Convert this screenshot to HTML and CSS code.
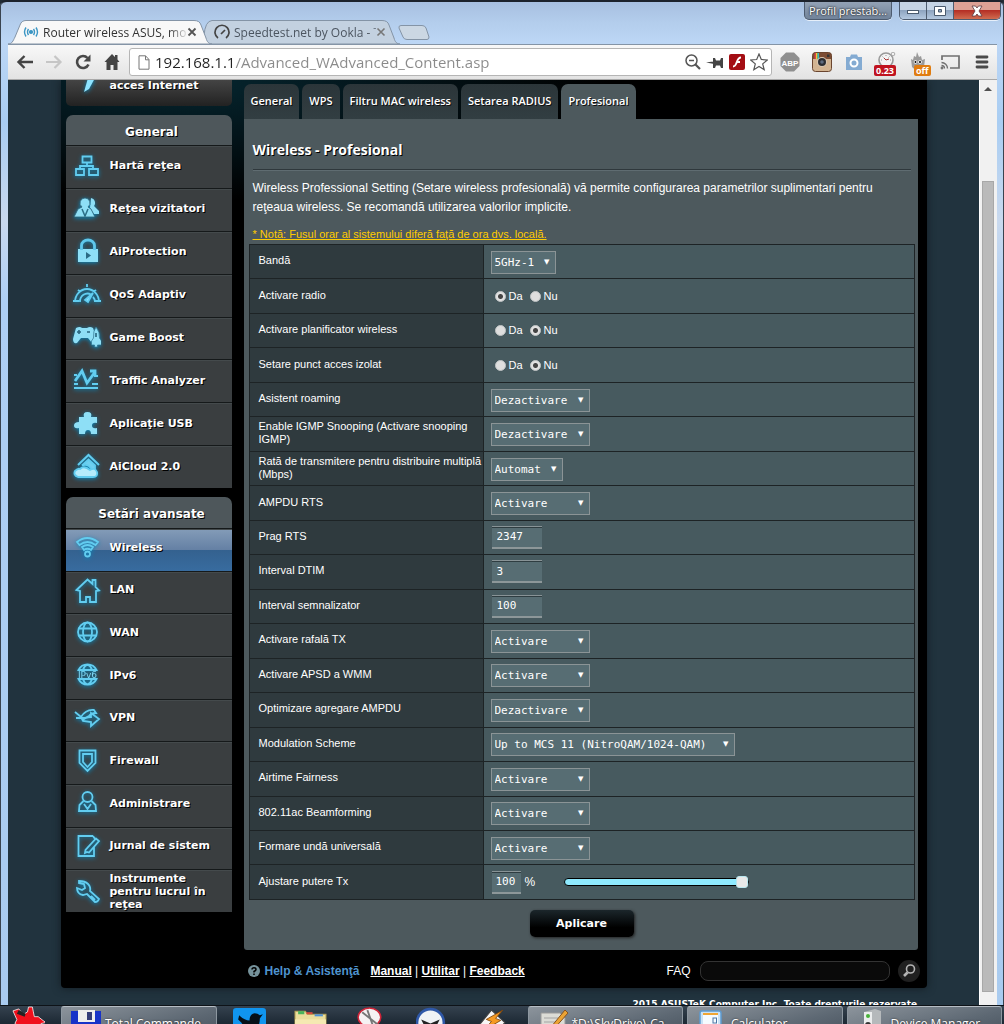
FILE: index.html
```html
<!DOCTYPE html>
<html lang="ro">
<head>
<meta charset="utf-8">
<meta name="viewport" content="width=device-width, initial-scale=1">
<title>Router wireless ASUS</title>
<link rel="stylesheet" href="styles.css">
</head>
<body>
<div class="desktop">
<div class="window">
  <header class="titlebar">
    <nav class="tabs" aria-label="File">
      <div class="tab tab-active">
        <svg class="tab-shape" viewBox="0 0 204 24" preserveAspectRatio="none"><path d="M0 24 C4 24 5 21 7 17 L12 5 C13 2 15 0.500 18 0.500 H186 C190 0.500 192 2 193 5 L198 18 C199 22 201 24 204 24 Z" fill="#f8f8f8" stroke="#8494a6"/></svg>
        <svg class="tab-icon" viewBox="0 0 16 16" fill="none" stroke="#3c96c4" stroke-width="1.400"><circle cx="8" cy="8" r="1.400" fill="#3c96c4"/><path d="M5.500 5Q3.500 8 5.500 11M10.500 5Q12.500 8 10.500 11M3 3.500Q0 8 3 12.500M13 3.500Q16 8 13 12.500"/></svg>
        <span class="tab-text">Router wireless ASUS, mo</span>
        <button class="tab-close" aria-label="Închide fila"><svg viewBox="0 0 10 10" stroke="#555" stroke-width="1.800"><path d="M1.500 1.500l7 7M8.500 1.500l-7 7"/></svg></button>
      </div>
      <div class="tab tab-idle">
        <svg class="tab-shape" viewBox="0 0 196 24" preserveAspectRatio="none"><path d="M4 24 Q2 22 0 16 Q1 1 8 0.500 H178 C182 0.500 184 2 185 5 L190 18 C191 22 193 24 196 24 Z" fill="#c3d1e0" stroke="#8494a6"/></svg>
        <svg class="tab-icon" viewBox="0 0 16 16" fill="none" stroke="#444" stroke-width="1.700"><path d="M4 14A7 7 0 1 1 12 14"/><path d="M7 10l4-4"/></svg>
        <span class="tab-text">Speedtest.net by Ookla - T</span>
        <button class="tab-close" aria-label="Închide fila"><svg viewBox="0 0 10 10" stroke="#777" stroke-width="1.600"><path d="M1.500 1.500l7 7M8.500 1.500l-7 7"/></svg></button>
      </div>
      <button class="new-tab" aria-label="Filă nouă"><svg viewBox="0 0 32 15"><path d="M3 .5H24Q27 .5 28 3L31 12Q31 14.500 29 14.500H9Q6 14.500 5 12L1 3Q.5.500 3 .5Z" fill="#cbd7e3" stroke="#8494a6"/></svg></button>
    </nav>
    <div class="controls">
      <button class="profile">Profil prestab...</button>
      <div class="winbtns">
        <button class="winbtn" aria-label="Minimizează"><svg viewBox="0 0 14 12"><rect x="1.500" y="5.500" width="11" height="3" fill="#fff" stroke="#4a5a6e"/></svg></button>
        <button class="winbtn" aria-label="Maximizează"><svg viewBox="0 0 14 12"><path fill-rule="evenodd" d="M1.500 1.500h11v9h-11zM5.500 4.500h3v2.500h-3z" fill="#fff" stroke="#4a5a6e"/></svg></button>
        <button class="winbtn winclose" aria-label="Închide"><svg viewBox="0 0 14 12"><path d="M2 1h3.500L7 3 8.500 1H12L9 6l3 5H8.500L7 9 5.500 11H2l3-5z" fill="#fff" stroke="#5a3a40" stroke-width=".8"/></svg></button>
      </div>
    </div>
  </header>

  <div class="toolbar">
    <div class="navbtns">
      <button aria-label="Înapoi"><svg viewBox="0 0 18 18" fill="none" stroke="#444" stroke-width="2.400"><path d="M17 9H3M8.500 3L2.500 9l6 6"/></svg></button>
      <button aria-label="Înainte"><svg viewBox="0 0 18 18" fill="none" stroke="#c6c6c6" stroke-width="2.200"><path d="M1 9h14M9.500 3l6 6-6 6"/></svg></button>
      <button aria-label="Reîncarcă"><svg viewBox="0 0 18 18"><path d="M14.500 11.500A6 6 0 1 1 13.500 5" fill="none" stroke="#484848" stroke-width="2.600"/><path d="M16.500 1.500v7h-7z" fill="#484848"/></svg></button>
      <button aria-label="Acasă"><svg viewBox="0 0 18 18"><path d="M9 1L1.500 9h2v8H7.500v-5h3v5h4V9h2L14.500 6.500V2h-2.500v2z" fill="#444"/></svg></button>
    </div>
    <div class="omnibox">
      <svg class="ico-page" viewBox="0 0 12 15" fill="#fff" stroke="#777"><path d="M1 .8h6.500L11 4.500v9.700H1z"/><path d="M7.500.8v4H11" fill="none"/></svg>
      <input class="url" type="text" aria-label="Adresă" value="192.168.1.1/Advanced_WAdvanced_Content.asp">
      <svg class="ico" viewBox="0 0 18 18" fill="none" stroke="#555" stroke-width="1.500"><circle cx="7.500" cy="7.500" r="5.500"/><path d="M5 7.500h5"/><path d="M11.500 11.500l4.500 4.500" stroke-width="2.200"/></svg>
      <svg class="ico" viewBox="0 0 18 18" fill="#444"><path d="M0 9.500L7 8.500v2.300zM7 5h2l1 2.500h4L15 5h2v10h-2l-1-2.500h-4L9 15H7z"/></svg>
      <svg class="ico" viewBox="0 0 18 18"><rect x="1" y="1" width="16" height="16" rx="2" fill="#a40e14"/><path d="M13 4.500C9.500 4.500 9.500 8 8 11Q7 13.500 5 13.500M8.500 9H12" fill="none" stroke="#fff" stroke-width="1.800"/></svg>
      <svg class="ico ico-star" viewBox="0 0 18 18" fill="#fff" stroke="#555" stroke-width="1.200"><path d="M9 1l2.300 5.500 6 .5-4.600 3.900 1.500 5.800L9 13.500l-5.200 3.200 1.500-5.800L.7 7l6-.5z"/></svg>
    </div>
    <div class="exts">
      <button class="ext" aria-label="ABP"><svg viewBox="0 0 20 20"><path d="M6 .5h8L19.500 6v8L14 19.500H6L.5 14V6z" fill="#8f8f8f"/><text x="10" y="13.500" text-anchor="middle" class="abp">ABP</text></svg></button>
      <button class="ext" aria-label="Instagram"><svg viewBox="0 0 20 20"><rect x=".5" y=".5" width="19" height="19" rx="3" fill="#d2b492"/><path d="M.5 7V3.500Q.5.500 3.500.5h13q3 0 3 3V7z" fill="#7c4c33"/><path d="M2.500.8h1.500V7H2.500z" fill="#d44"/><path d="M4 .5h1.500V7H4z" fill="#ec3"/><path d="M5.500.5H7V7H5.500z" fill="#3bb"/><circle cx="10" cy="10" r="5" fill="#d8c8b4"/><circle cx="10" cy="10" r="4" fill="#2c2e33"/><circle cx="10" cy="10" r="1.800" fill="#5d6b80"/><rect x="15" y="2.500" width="2.500" height="2.500" fill="#333"/><rect x=".5" y=".5" width="19" height="19" rx="3" fill="none" stroke="#6a452f"/></svg></button>
      <button class="ext" aria-label="Captură"><svg viewBox="0 0 20 20"><path d="M2 5h4l1-2.500h6L14 5h4v13H2z" fill="#84abd2"/><circle cx="10" cy="11" r="3.500" fill="none" stroke="#fff" stroke-width="2"/></svg></button>
      <button class="ext" aria-label="Cronometru"><svg viewBox="0 0 20 20"><circle cx="10" cy="8" r="7" fill="#f4f4f4" stroke="#999" stroke-width="1.600"/><circle cx="17" cy="2" r="1.800" fill="none" stroke="#aaa"/><path d="M10 3v1M5 8h1M14 8h1M6.500 4.500l1 1M13.500 4.500l-1 1" stroke="#999"/><path d="M10 8L8 6M10 8l3-1" stroke="#a33"/></svg><span class="badge badge-red">0.23</span></button>
      <button class="ext" aria-label="Fantomă"><svg viewBox="0 0 20 20"><path d="M3 7L5 8 6 4l2 1 1-5 2 5 2-1 1 4 3-1-1 8q-6 7-12 0z" fill="#9a9a9a"/><circle cx="7.500" cy="10" r="1.800" fill="#fff"/><circle cx="12" cy="10" r="1.800" fill="#fff"/><circle cx="7.500" cy="10" r="1"/><circle cx="12" cy="10" r="1"/></svg><span class="badge badge-orange">off</span></button>
      <button class="ext" aria-label="Proiectează"><svg viewBox="0 0 20 20" fill="none" stroke="#707070" stroke-width="1.700"><path d="M2 8V4h17v12h-9"/><path d="M1.500 10.500A6 6 0 0 1 7.500 16.500M1.500 13.500A3 3 0 0 1 4.500 16.500" stroke-width="1.300"/><circle cx="2" cy="16" r=".6"/></svg></button>
      <button class="ext" aria-label="Meniu"><svg viewBox="0 0 20 20" stroke="#4a4a4a" stroke-width="2.800" stroke-linecap="round"><path d="M5 5h10M5 10h10M5 15h10"/></svg></button>
    </div>
  </div>

  <div class="view">
    <div class="page">
      <div class="router">
        <aside class="side">
          <a class="quick" href="#">
            <svg class="menu-icon" viewBox="0 0 28 28"><path d="M15 0h7l-6 11-5 3z" fill="#8fe4ff"/></svg>
            <span>acces Internet</span>
          </a>
          <section class="menu menu-general">
            <h2>General</h2>
            <ul>
              <li><a href="#"><svg class="menu-icon" viewBox="0 0 28 28"><path d="M9.500 4.500h9v6h-9zM3 17h8v6H3zM16 17h9v6h-9zM14 11v3M7 17v-3h13v3"/></svg>Hartă reţea</a></li>
              <li><a href="#"><svg class="menu-icon solid" viewBox="0 0 28 28"><path d="M18 3a5 5 0 0 1 3 8l5 5v3h-5l-4-6z"/><path d="M12 3a5 5 0 0 1 3 9l3 2 4 8H1l4-8 4-2a5 5 0 0 1 3-9z" stroke="#2b5f74" stroke-width=".8"/><path d="M9 14l3 7 3-7" fill="none" stroke="#2b6f88" stroke-width="1.500"/></svg>Reţea vizitatori</a></li>
              <li><a href="#"><svg class="menu-icon solid" viewBox="0 0 28 28"><path d="M5 11h20v13H5z"/><path d="M8.500 12V7.500a6.500 5.500 0 0 1 13 0V12" fill="none" stroke="#5fc8ec" stroke-width="2.800"/><path d="M13 14l5 3.500-5 3.500z" fill="#2c6b84"/></svg>AiProtection</a></li>
              <li><a href="#"><svg class="menu-icon" viewBox="0 0 28 28" stroke-width="1.800"><path d="M2 21a12 13 0 1 1 24 0M7 21a7.500 8 0 0 1 11-7.500M22 21q0-3-2-5M14 3v3M0 20h6M22 20h6M5 9l2.500 2M23 9l-2.500 2"/><path d="M12 19l8-7-5 9z" fill="#8fe4ff"/></svg>QoS Adaptiv</a></li>
              <li><a href="#"><svg class="menu-icon solid" viewBox="0 0 28 28"><path d="M3 5q4-2 6 0h5q3-2 6 0l2 6v9h-3l-4-5H8l-4 5Q0 21 0 16z"/><path d="M23 4q4 5 3.500 11l2 3v4h-4v2h-3v-2h-3v-4l2-3Q20 8 23 4z" stroke="#2d718c" stroke-width=".7"/><path d="M4 9h4M6 7v4M14 9h3M23 10v4" stroke="#286780" stroke-width="1.600"/></svg>Game Boost</a></li>
              <li><a href="#"><svg class="menu-icon" viewBox="0 0 28 28" stroke-width="1.800"><path d="M1 22h24M1 18h4M19 18h6M1 9h3M21 10h4"/><path d="M2 15L9 5l5 12 8-11M17 5h5v5" stroke-width="2.800"/></svg>Traffic Analyzer</a></li>
              <li><a href="#"><svg class="menu-icon solid" viewBox="0 0 28 28"><path d="M6 8h5q-1.500-5 3.500-5T18 8h6v6q-5-1-5 2.500t5 2.500v6h-6q0-4-3-4t-3 4H6v-6q-5 1-5-2.500T6 13z"/></svg>Aplicaţie USB</a></li>
              <li><a href="#"><svg class="menu-icon" viewBox="0 0 28 28"><path d="M5 13L15.500 3 26 13" stroke-width="2"/><path d="M9 13.500L15.500 7.500 22 13.500v4h-3Q15 11 9 13.500z" fill="#6fd0f0"/><path d="M5 25q-5-2-3-6 3-3 5-2 4-4 10 1 5-3 7 2 1 5-4 5z" fill="#b5ecfc"/></svg>AiCloud 2.0</a></li>
            </ul>
          </section>
          <section class="menu menu-advanced">
            <h2>Setări avansate</h2>
            <ul>
              <li class="selected"><a href="#"><svg class="menu-icon" viewBox="0 0 28 28" stroke="#4cbde6"><path d="M4 9q10-8 21 0l-2.500 3q-8-6-16 0zM9 14q5.500-4 11 0l-2 3q-3.500-2.500-7 0z"/><circle cx="14.500" cy="21" r="2.500"/></svg>Wireless</a></li>
              <li><a href="#"><svg class="menu-icon" viewBox="0 0 28 28"><path d="M3.500 14L14.500 3.500l5 4.500V4h3v7l3.500 3.500-3 .5v11h-6v-5h-4v5H7V15z"/></svg>LAN</a></li>
              <li><a href="#"><svg class="menu-icon" viewBox="0 0 28 28"><circle cx="14.500" cy="13" r="9.500"/><ellipse cx="14.500" cy="13" rx="4.500" ry="9.500"/><path d="M5.500 9.500h18M5.500 16.500h18"/></svg>WAN</a></li>
              <li><a href="#"><svg class="menu-icon" viewBox="0 0 28 28"><path d="M5.500 9a10 10 0 0 1 18 0zM5.500 18a10 10 0 0 0 18 0zM10 9q1-4 4.500-5.500Q18 5 19 9M10 18q1 4 4.500 5.500Q18 22 19 18"/><text x="14.500" y="17" text-anchor="middle" class="ipv6">IPv6</text></svg>IPv6</a></li>
              <li><a href="#"><svg class="menu-icon" viewBox="0 0 28 28" stroke-width="1.500"><path d="M2 8l6 5q5-8 13-7l2 3q-5 0-7 3l-4 2H3M8 13l2 4 8 1v4l8-7-8-6v4q-6 0-8 3"/></svg>VPN</a></li>
              <li><a href="#"><svg class="menu-icon" viewBox="0 0 28 28"><path d="M6.500 3.500h16V16l-8 8-8-8zM10 7h9v8l-4.500 5-4.500-5z"/></svg>Firewall</a></li>
              <li><a href="#"><svg class="menu-icon" viewBox="0 0 28 28"><circle cx="14.500" cy="8" r="5"/><path d="M10.500 12l-4 4-.5 6h17l-.5-6-4-4M11 15l3.500 5 3.500-5"/></svg>Administrare</a></li>
              <li><a href="#"><svg class="menu-icon" viewBox="0 0 28 28"><path d="M20 4H5.500v20H21v-9M20 4l2 3M14 20l-2 1 .5-3L23 6.500l3 2.500-10 11.500z"/></svg>Jurnal de sistem</a></li>
              <li class="long"><a href="#"><svg class="menu-icon" viewBox="0 0 28 28" stroke-width="1.800"><path d="M6 6l5 1 1 4-3 2-5-2q0 6 6 7l4-1 8 8q3 0 4-3l-9-8q1-4-2-7t-9-3zM18 19l4 4"/></svg>Instrumente pentru lucrul în reţea</a></li>
            </ul>
          </section>
        </aside>

        <main class="main">
          <nav class="subtabs">
            <a href="#">General</a><a href="#">WPS</a><a href="#">Filtru MAC wireless</a><a href="#">Setarea RADIUS</a><a class="current" href="#">Profesional</a>
          </nav>
          <form class="panel">
            <h1>Wireless - Profesional</h1>
            <p class="intro">Wireless Professional Setting (Setare wireless profesională) vă permite configurarea parametrilor suplimentari pentru reţeaua wireless. Se recomandă utilizarea valorilor implicite.</p>
            <a class="note" href="#">* Notă: Fusul orar al sistemului diferă faţă de ora dvs. locală.</a>
            <table class="settings">
              <tr><th><label for="band">Bandă</label></th><td><span class="pick w-65"><select id="band"><option>5GHz-1</option></select></span></td></tr>
              <tr><th>Activare radio</th><td><div class="radios"><label><input type="radio" name="radio" checked>Da</label><label><input type="radio" name="radio">Nu</label></div></td></tr>
              <tr><th>Activare planificator wireless</th><td><div class="radios"><label><input type="radio" name="sched">Da</label><label><input type="radio" name="sched" checked>Nu</label></div></td></tr>
              <tr><th>Setare punct acces izolat</th><td><div class="radios"><label><input type="radio" name="iso">Da</label><label><input type="radio" name="iso" checked>Nu</label></div></td></tr>
              <tr><th><label for="roam">Asistent roaming</label></th><td><span class="pick"><select id="roam"><option>Dezactivare</option></select></span></td></tr>
              <tr><th><label for="igmp">Enable IGMP Snooping (Activare snooping<br>IGMP)</label></th><td><span class="pick"><select id="igmp"><option>Dezactivare</option></select></span></td></tr>
              <tr><th><label for="rate">Rată de transmitere pentru distribuire multiplă<br>(Mbps)</label></th><td><span class="pick w-72"><select id="rate"><option>Automat</option></select></span></td></tr>
              <tr><th><label for="ampdu">AMPDU RTS</label></th><td><span class="pick"><select id="ampdu"><option>Activare</option></select></span></td></tr>
              <tr><th><label for="rts">Prag RTS</label></th><td><input class="num" id="rts" type="text" value="2347"></td></tr>
              <tr><th><label for="dtim">Interval DTIM</label></th><td><input class="num" id="dtim" type="text" value="3"></td></tr>
              <tr><th><label for="beacon">Interval semnalizator</label></th><td><input class="num" id="beacon" type="text" value="100"></td></tr>
              <tr><th><label for="burst">Activare rafală TX</label></th><td><span class="pick"><select id="burst"><option>Activare</option></select></span></td></tr>
              <tr><th><label for="apsd">Activare APSD a WMM</label></th><td><span class="pick"><select id="apsd"><option>Activare</option></select></span></td></tr>
              <tr><th><label for="aggr">Optimizare agregare AMPDU</label></th><td><span class="pick"><select id="aggr"><option>Dezactivare</option></select></span></td></tr>
              <tr><th><label for="mod">Modulation Scheme</label></th><td><span class="pick w-244"><select id="mod"><option>Up to MCS 11 (NitroQAM/1024-QAM)</option></select></span></td></tr>
              <tr><th><label for="air">Airtime Fairness</label></th><td><span class="pick"><select id="air"><option>Activare</option></select></span></td></tr>
              <tr><th><label for="beam">802.11ac Beamforming</label></th><td><span class="pick"><select id="beam"><option>Activare</option></select></span></td></tr>
              <tr><th><label for="univ">Formare undă universală</label></th><td><span class="pick"><select id="univ"><option>Activare</option></select></span></td></tr>
              <tr><th><label for="power">Ajustare putere Tx</label></th><td><div class="power"><input class="num num-small" id="power" type="text" value="100"><span class="percent">%</span><input class="slider" type="range" min="0" max="100" value="100" aria-label="Ajustare putere Tx"></div></td></tr>
            </table>
            <button class="apply" type="button">Aplicare</button>
          </form>
          <footer class="foot">
            <svg class="help-icon" viewBox="0 0 12 12"><circle cx="6" cy="6" r="6" fill="#76939c"/><path d="M4 4.600Q4 2.800 6 2.800T8 4.500Q8 5.500 6 6.500V7.500M6 8.500V10" fill="none" stroke="#000" stroke-width="1.500"/></svg>
            <span class="help">Help &amp; Asistenţă</span>
            <span class="links"><a href="#">Manual</a> | <a href="#">Utilitar</a> | <a href="#">Feedback</a></span>
            <label class="faq-label" for="faq">FAQ</label>
            <input class="faq" id="faq" type="text">
            <button class="search" type="button" aria-label="Caută"><svg viewBox="0 0 22 22" fill="none" stroke="#b4b4b4"><circle cx="12.500" cy="9" r="4" stroke-width="1.600"/><path d="M9.500 12.500L6 16" stroke-width="2.600"/></svg></button>
          </footer>
        </main>
      </div>
      <p class="copyright">2015 ASUSTeK Computer Inc. Toate drepturile rezervate.</p>
    </div>
    <div class="scrollbar"><span class="scroll-up"></span><span class="scroll-thumb"></span></div>
  </div>
</div>

<div class="taskbar">
  <button class="task-icon first" aria-label="Irfan"><svg viewBox="0 0 34 34"><path d="M1 5l6-2 3 4 3 1 3-2 1-5h4l1 5 1 5 4 0 5 4 3 2-5 1-2 5 5 8-9 4H9l2-9-7 1 4-6-5-3 2-4z" fill="#f0101c" stroke="#fff" stroke-width=".8"/><path d="M7 4l7 4-1 3-8-3z" fill="#222"/></svg></button>
  <button class="task"><svg viewBox="0 0 32 32"><path d="M1 3h30v28H1z" fill="#1733c8"/><path d="M8 2h17v12H8z" fill="#ededed"/><path d="M17 4h5v8h-5z" fill="#333c78"/><path d="M6 17h21v14H6z" fill="#fff"/></svg><span>Total Commande</span></button>
  <button class="task-icon" aria-label="Twitter"><svg viewBox="0 0 32 32"><rect y="2" width="32" height="30" rx="3" fill="#1095ef"/><path d="M6 9q5 5 10 5 0-6 5-7 3 0 5 2l3-1-3 4q0 14-13 14l-7-2 5-2-4-4 2-1-4-4z" fill="#061018"/></svg></button>
  <button class="task-icon" aria-label="Dosare"><svg viewBox="0 0 32 32"><path d="M1 5h10l2 3h18v22H1z" fill="#eadd9b" stroke="#b9a457"/><path d="M4 5h6v3H4z" fill="#48b35c"/><path d="M12 6h6v2h-6z" fill="#da4a3c"/><path d="M20 8h8v2h-8z" fill="#4f92d8"/><path d="M1 13h30v17H1z" fill="#f5e9b2"/></svg></button>
  <button class="task-icon" aria-label="Snip"><svg viewBox="0 0 32 32"><ellipse cx="14" cy="11" rx="11" ry="9" fill="#f5f1f2" stroke="#cf2438" stroke-width="1.500"/><path d="M7 6l15 12M12 4l5 14" stroke="#777" stroke-width="1.800"/></svg></button>
  <button class="task-icon" aria-label="Player"><svg viewBox="0 0 32 32"><circle cx="14" cy="16" r="13" fill="#eff2f5" stroke="#2f58a8" stroke-width="2.500"/><path d="M5 13l9 4 9-4-3 6-6-1-6 1z" fill="#222"/></svg></button>
  <button class="task-icon" aria-label="Winamp"><svg viewBox="0 0 32 32"><path d="M1 20L14 4l13 12-12 14z" fill="#f6f6f6" stroke="#444"/><path d="M25 4L9 13l5 2-8 9 17-10-5-2z" fill="#f59a23" stroke="#7c430a" stroke-width=".8"/></svg></button>
  <button class="task"><svg viewBox="0 0 32 32"><path d="M4 5h19l5 5v22H4z" fill="#dcdcd6" stroke="#999"/><path d="M7 10h14M7 14h14" stroke="#a4a4a4"/><path d="M28 2l3 3-15 17-4 2 2-5z" fill="#eba335" stroke="#87521d"/></svg><span>*D:\SkyDrive\ Ca</span></button>
  <button class="task"><svg viewBox="0 0 32 32"><rect x="4" y="3" width="21" height="28" rx="2" fill="#c9e2f6" stroke="#5e9bd0" stroke-width="1.500"/><path d="M7 6h15v10H7z" fill="#f6fbff"/><path d="M7 5h15v2H7z" fill="#f0a534"/><rect x="17" y="10" width="3.500" height="5" fill="none" stroke="#4a76a6"/></svg><span>Calculator</span></button>
  <button class="task"><svg viewBox="0 0 32 32"><path d="M8 4l11-3 6 2v29H8z" fill="#b5b9bb"/><path d="M8 4h8v28H8z" fill="#eceeee"/><circle cx="12" cy="8" r="2" fill="#48b13a"/><circle cx="12" cy="17" r="3" fill="#333"/></svg><span>Device Manager</span></button>
</div>
</div>
</body>
</html>
```

FILE: styles.css
```css
* { box-sizing: border-box; }
body { margin: 0; font-family: "Liberation Sans", Arial, sans-serif; color: #fff; }
button { font: inherit; color: inherit; border: 0; padding: 0; margin: 0; background: none; }
svg { display: block; }
h1, h2, p, ul { margin: 0; padding: 0; }
ul { list-style: none; }

.desktop { height: 100vh; display: flex; flex-direction: column; overflow: hidden; background: #202b35; }
.window {
  flex: 1; min-height: 0; display: flex; flex-direction: column; padding: 0 7px 0 8px;
  border-top: 2px solid #1c222c; border-radius: 6px 6px 0 0;
  background: linear-gradient(180deg, #a7bfe0 0, #b3cdec 20px, #bcd6f5 40px, #a9cdf2 120px, #c9d9ee 220px, #aecff4 300px, #a9cbef 100%);
  box-shadow: inset 1px 0 #39434f, inset -1px 0 #39434f;
}

/* title bar */
.titlebar { height: 42px; display: flex; justify-content: space-between; }
.tabs { display: flex; align-items: flex-end; }
.tab { position: relative; display: flex; align-items: center; height: 24px; font: 12px "Open Sans", sans-serif; }
.tab-shape { position: absolute; inset: 0; width: 100%; height: 100%; }
.tab-active { width: 204px; padding-left: 15px; color: #333; z-index: 1; }
.tab-idle { width: 196px; padding-left: 10px; margin-left: -8px; color: #4c5560; }
.tab-icon { position: relative; width: 16px; height: 16px; margin-right: 4px; flex: none; }
.tab-text {
  position: relative; width: 144px; white-space: nowrap;
  -webkit-mask-image: linear-gradient(90deg, #000 126px, transparent 146px);
}
.tab-idle .tab-text { width: 142px; -webkit-mask-image: linear-gradient(90deg, #000 134px, transparent 154px); }
.tab-close { position: relative; width: 10px; height: 10px; flex: none; }
.new-tab { width: 32px; height: 15px; margin: 0 0 4px -2px; }
.controls { display: flex; gap: 7px; align-items: flex-start; margin-right: -4px; }
.profile, .winbtns { height: 18px; border: 1px solid #4d5b6f; border-top: 0; border-radius: 0 0 5px 5px; box-shadow: 0 1px #e6effa; }
.profile {
  width: 88px; font: 11px/16px "Open Sans", sans-serif; color: #fff; white-space: nowrap;
  background: linear-gradient(#93a2b5, #71839a); text-shadow: 0 0 2px #222, 0 0 2px #222;
}
.winbtns { display: flex; overflow: hidden; }
.winbtn { width: 27px; display: grid; place-items: center; background: linear-gradient(#c5d3e4 0 45%, #8ea4c0 50%, #b4c8e0); border-right: 1px solid #4d5b6f; }
.winbtn svg { width: 14px; height: 12px; }
.winclose { width: 46px; border-right: 0; background: linear-gradient(#dda195 0 45%, #b52f25 50%, #d06c50); }

/* toolbar */
.toolbar {
  height: 36px; display: flex; align-items: center; padding: 0 5px 0 8px;
  background: linear-gradient(#f8f8f8, #e3e3e3); border-top: 1px solid #8494a6; border-bottom: 1px solid #a9a9a9;
}
.navbtns { display: flex; gap: 11px; margin-right: 8px; }
.navbtns svg { width: 18px; height: 18px; }
.omnibox { flex: 1; height: 28px; display: flex; align-items: center; gap: 4px; padding: 0 3px 0 8px; background: #fff; border: 1px solid #b5b5b5; border-radius: 3px; }
.ico-page { width: 12px; height: 15px; }
.url {
  flex: 1; min-width: 0; border: 0; padding: 0; margin-left: 1px; font: 15px/24px "Open Sans", sans-serif; color: transparent;
  background: linear-gradient(90deg, #222 78px, #8a8a8a 78px); -webkit-background-clip: text; background-clip: text;
}
.ico { width: 18px; height: 18px; }
.exts { display: flex; gap: 12px; margin-left: 8px; }
.ext { position: relative; width: 20px; height: 20px; }
.abp { font: bold 8px "Liberation Sans", sans-serif; fill: #fff; }
.badge { position: absolute; left: -2px; top: 13px; height: 11px; padding: 0 2px; border-radius: 2px; font: bold 9px/11px "Open Sans", sans-serif; color: #fff; }
.badge-red { background: #c0131f; }
.badge-orange { left: 6px; background: #e07c10; }

/* page area */
.view { flex: 1; min-height: 0; display: flex; overflow: hidden; }
.page { flex: 1; overflow: hidden; background: #21333e; }
.router {
  width: 866px; max-width: 100%; margin: 0 auto; display: flex; align-items: flex-start; gap: 12px; padding: 0 9px 2px 5px;
  border-radius: 0 0 4px 4px; box-shadow: 0 0 8px #131c22;
  background: radial-gradient(ellipse 420px 120px at 130px 0, #06262f 0, #03151b 45%, #000 100%) #000;
}
.side { width: 166px; flex: none; font: bold 11px/13px "DejaVu Sans", Verdana, sans-serif; text-shadow: 1px 1px #000; }
.side a { color: #fff; text-decoration: none; }
.quick { height: 26px; display: flex; align-items: center; gap: 9px; padding: 0 0 16px 7px; border-radius: 0 0 5px 5px; background: linear-gradient(#444, #222); overflow: hidden; }
.menu-icon { width: 28px; height: 28px; flex: none; fill: none; stroke: #62cdf0; stroke-width: 1.800; filter: drop-shadow(0 1px 2px #0b86b8); }
.quick .menu-icon { align-self: flex-start; margin-top: -2px; stroke: none; }
.solid { fill: #8edff6; stroke: none; }
.ipv6 { font: 9px "DejaVu Sans", sans-serif; fill: #7fd8f5; stroke: none; text-shadow: none; }
.menu { margin-top: 9px; }
.menu h2 { height: 30px; padding-top: 4px; font-size: 12px; line-height: 26px; text-align: center; border-radius: 7px 7px 0 0; background: #4e575b; padding-left: 6px; }
.menu ul { display: grid; grid-auto-rows: 1fr; background: #3a3e40; }
.menu li { display: grid; border-top: 1px solid #15191a; box-shadow: inset 0 1px #444a4c; }
.menu li a { display: flex; align-items: center; gap: 9px; padding: 0 10px 2px 7px; }
.menu-general ul { height: 343px; }
.menu-advanced h2 { height: 31px; }
.menu-advanced ul { height: 384px; }
.menu-advanced li a { padding-bottom: 5px; }
.menu-advanced .long a { padding-bottom: 0; }
.selected { background: linear-gradient(#849cb8 0, #6480a4 50%, #34618f 50%, #386c9f 100%); }

/* settings panel */
.main { flex: 1; min-width: 0; }
.subtabs { display: flex; gap: 3px; padding-top: 4px; }
.subtabs a {
  height: 35px; padding: 0 7px; font: 600 11px/34px "Open Sans", Tahoma, sans-serif; color: #fff; text-decoration: none;
  border-radius: 7px 7px 0 0; background: linear-gradient(#2b3539, #323e42); text-shadow: 1px 1px #111;
}
.subtabs .current { background: #4d595d; }
.panel { display: flex; flex-direction: column; align-items: flex-start; padding: 21px 3px 13px 5px; background: #4d595d; border-radius: 0 0 3px 3px; }
.panel h1 { align-self: stretch; margin: 0 4px; height: 30px; font: bold 14px/20px "Open Sans", Verdana, sans-serif; text-shadow: 1px 1px #000; border-bottom: 1px solid #2f383c; box-shadow: 0 1px #5f6c71; }
.intro { margin: 9px 4px 0; font-size: 12px; line-height: 19px; }
.note { margin: 10px 4px 2px; font-size: 11px; line-height: 15px; color: #fc0; }
.settings { width: 100%; height: 656px; table-layout: fixed; border-collapse: collapse; font-size: 11px; line-height: 13px; background: #475a5f; }
.settings tr { height: 34px; }
.settings th, .settings td { border: 1px solid #1d2325; padding: 0 7px; text-align: left; }
.settings th { width: 234px; padding: 0 0 2px 9px; font-weight: normal; white-space: nowrap; background: #2f3a3e; }
.settings td { border-left-color: #222b2e; }
.pick { position: relative; display: block; width: 99px; height: 23px; margin-top: 1px; }
.pick::after { content: "▼"; position: absolute; right: 6px; top: 0; font: 7px/23px "DejaVu Sans", sans-serif; pointer-events: none; }
.pick select { appearance: none; width: 100%; height: 23px; padding: 0 0 0 3px; border: 1px solid #8b9496; border-radius: 0; background: #576d73; color: #fff; font: 11px "DejaVu Sans Mono", monospace; }
.w-65 { width: 65px; }
.w-72 { width: 72px; }
.w-244 { width: 244px; }
.radios { display: flex; gap: 7px; padding-left: 4px; }
.radios label { display: flex; align-items: center; gap: 3px; }
.radios input { appearance: none; width: 11px; height: 11px; margin: 0; border-radius: 50%; border: 1px solid #bfc3c4; background: #dedede; }
.radios input:checked { background: radial-gradient(circle, #444 0 2px, #e2e2e2 3px); }
.num { display: block; width: 50px; height: 23px; margin-left: 1px; padding: 0 0 0 5px; border: 0; border-top: 1px solid #889396; border-bottom: 2px solid #8d9799; background: #576d73; box-shadow: inset 0 1px #2f3d41; color: #fff; font: 11px "DejaVu Sans Mono", monospace; }
.num-small { width: 29px; padding-left: 4px; }
.power { display: flex; align-items: center; }
.percent { margin-left: 4px; font-size: 12px; }
.slider { appearance: none; width: 185px; height: 13px; margin: 0 0 0 29px; background: none; }
.slider::-webkit-slider-runnable-track { height: 8px; border: 1px solid #000; border-radius: 4px; background: #8feaff; }
.slider::-webkit-slider-thumb { appearance: none; width: 12px; height: 12px; margin-top: -3px; border: 1px solid #b8e6ee; border-radius: 3px; background: #e8e8e8; }
.apply { align-self: center; width: 104px; height: 27px; margin-top: 10px; border-radius: 5px; background: linear-gradient(#1b262b, #000 65%); box-shadow: 1px 1px 3px #222; font: bold 11px/27px "DejaVu Sans", Verdana, sans-serif; }

.foot { display: flex; align-items: center; height: 31px; margin-top: 5px; padding-left: 4px; margin-right: -2px; font-size: 12px; }
.help-icon { width: 12px; height: 12px; margin-right: 5px; }
.help { font-weight: bold; color: #4f94cf; }
.links { margin-left: 11px; }
.links a { color: #fff; font-weight: bold; }
.faq-label { margin-left: auto; }
.faq { width: 190px; height: 20px; margin: 0 8px 0 9px; padding: 0 8px; border: 1px solid #333; border-radius: 8px; background: #0a0a0a; color: #fff; }
.search { width: 22px; height: 22px; border-radius: 50%; background: #202020; }
.copyright { width: 866px; max-width: 100%; margin: 9px auto 0; padding-right: 6px; text-align: right; font: bold 9px/14px "DejaVu Sans", sans-serif; }

.scrollbar { width: 18px; display: flex; flex-direction: column; background: #f1f1f1; border-left: 1px solid #fff; padding: 7px 3px 13px 2px; }
.scroll-up { align-self: center; border: 4px solid transparent; border-top: 0; border-bottom: 4px solid #505050; margin-bottom: 90px; }
.scroll-thumb { flex: 1; background: #bababa; border: 1px solid #a8a8a8; }

/* taskbar */
.taskbar { height: 19px; display: flex; align-items: flex-start; overflow: hidden; border-top: 1px solid #0e1318; background: linear-gradient(#35424f, #1c2833); padding-right: 2px; }
.task-icon { width: 33px; height: 33px; flex: none; margin-left: 28px; }
.task-icon.first { margin: 0 16px 0 12px; }
.task-icon svg { width: 33px; height: 33px; }
.task {
  flex: 1; min-width: 0; height: 36px; display: flex; align-items: center; gap: 3px; padding-left: 8px; margin-left: 4px;
  border: 1px solid #8d97a0; border-top-color: #b6bdc4; border-radius: 3px; background: linear-gradient(165deg, #8c949c, #5d6873 60%, #454f5a);
  font: 12px/16px "Open Sans", sans-serif; white-space: nowrap; text-shadow: 0 0 2px #222;
}
.task svg { width: 32px; height: 32px; flex: none; }
.task-icon + .task { margin-left: 18px; }
.first + .task { margin-left: 0; }
.task + .task-icon { margin-left: 16px; }
```
